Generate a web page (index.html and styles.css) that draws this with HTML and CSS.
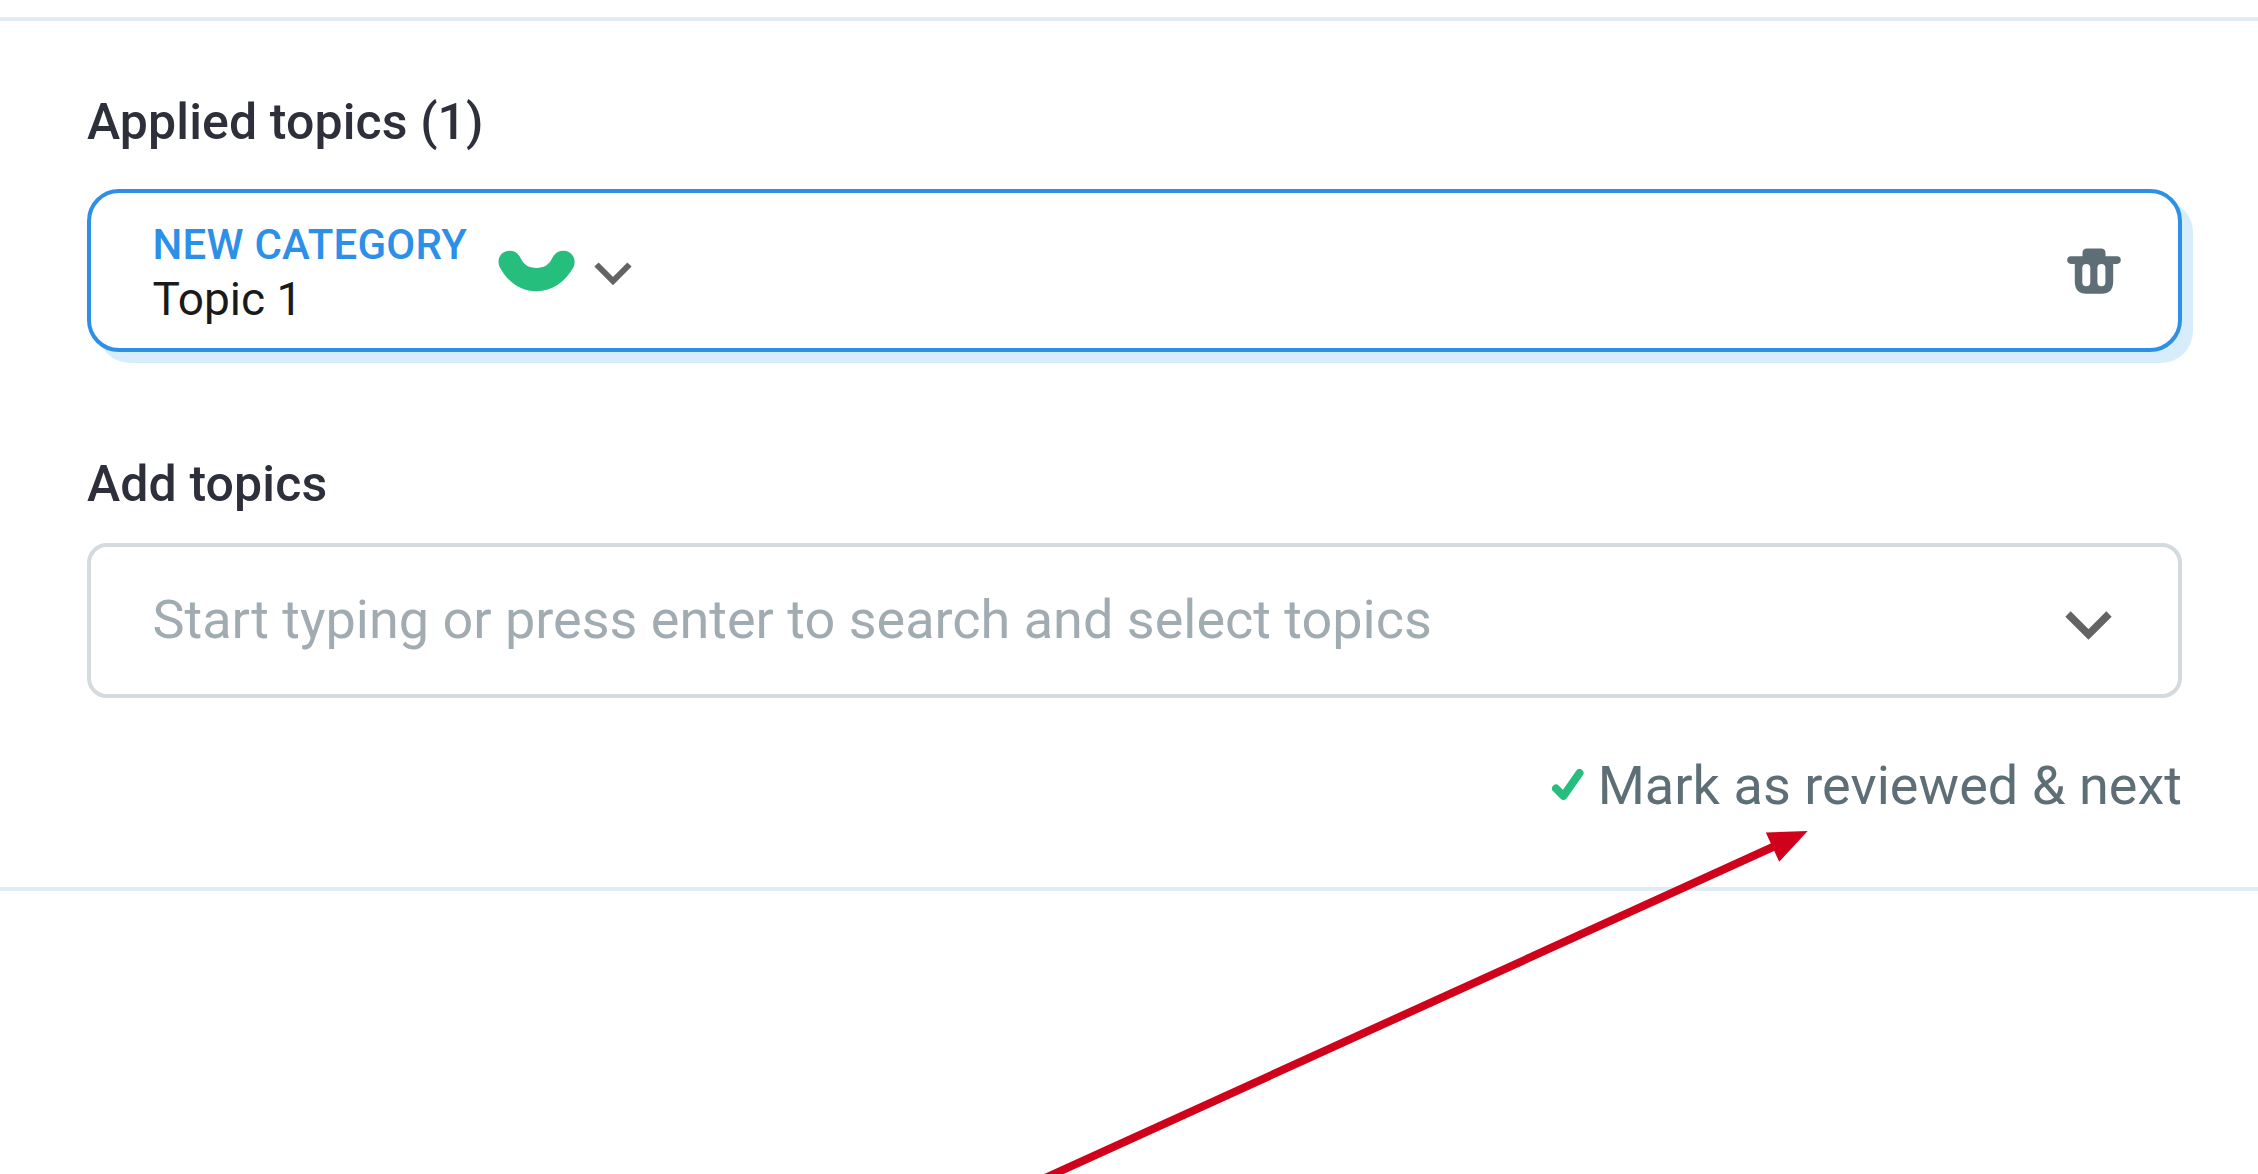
FILE: index.html
```html
<!DOCTYPE html>
<html lang="en">
<head>
<meta charset="utf-8">
<title>Topics</title>
<link rel="stylesheet" href="styles.css">
</head>
<body>
<main class="panel">
  <h2 class="heading">Applied topics (1)</h2>
  <div class="topic-card">
    <div class="topic-text">
      <span class="topic-category">NEW CATEGORY</span>
      <span class="topic-name">Topic 1</span>
    </div>
    <svg class="smile" width="78" height="42" viewBox="0 0 78 42"><path d="M1.600 17C-1.800 9 3 .8 11.300 .8C17 .8 20.500 3.500 22.800 8.500C26 15 31 17.900 38.500 17.900C46 17.900 50.800 15 54 8.500C56.500 3.500 60 .8 65.500 .8C73.500 .8 79 8.500 75.600 17C67.500 32 54 41.300 38.500 41.300C23 41.300 9.500 32 1.600 17Z" fill="#25be7d"/></svg>
    <svg class="chevron-small" width="38" height="24" viewBox="0 0 38 24"><path d="M2.500 2.500L19 19L35.500 2.500" fill="none" stroke="#636363" stroke-width="6"/></svg>
    <svg class="trash" width="54" height="46" viewBox="0 0 54 46"><path fill="#5e6e76" fill-rule="evenodd" d="M20 .5H34Q38.500 .5 38.500 5V8.300H50A3.700 3.700 0 0 1 50 15.900H46.200V33.500Q46.200 45.700 34.500 45.700H19.500Q7.800 45.700 7.800 33.500V15.900H4A3.700 3.700 0 0 1 4 8.300H15.500V5Q15.500 .5 20 .5ZM15.300 19.900V34.300A4 4 0 0 0 23.300 34.300V19.900A4 4 0 0 0 15.300 19.900ZM30.400 19.900V34.300A4 4 0 0 0 38.400 34.300V19.900A4 4 0 0 0 30.400 19.900Z"/></svg>
  </div>
  <h2 class="heading heading-add">Add topics</h2>
  <div class="select">
    <span class="placeholder">Start typing or press enter to search and select topics</span>
    <svg class="chevron" width="48" height="30" viewBox="0 0 48 30"><path d="M4 3L24.500 23.500L45 3" fill="none" stroke="#636363" stroke-width="7.500"/></svg>
  </div>
  <div class="actions">
    <svg class="check" width="32" height="32" viewBox="0 0 32 32"><path d="M4 19.500L11.500 27L27.500 4" fill="none" stroke="#25be7d" stroke-width="8" stroke-linecap="round" stroke-linejoin="round"/></svg>
    <span class="action-label">Mark as reviewed &amp; next</span>
  </div>
</main>
<svg class="arrow" width="2258" height="1174" viewBox="0 0 2258 1174"><path d="M1000 1198.500L1774 846.500" stroke="#d0021b" stroke-width="8"/><path d="M1807.700 831L1765.800 832.500L1779.200 861.700Z" fill="#d0021b"/></svg>
</body>
</html>
```
FILE: styles.css
```css
body {
  display: flow-root;
  margin: 0;
  height: 1174px;
  overflow: hidden;
  background: #fff;
  font-family: Roboto, sans-serif;
}

.panel {
  box-sizing: border-box;
  height: 874px;
  margin-top: 17px;
  padding: 71px 76px 0 87px;
  border-top: 4px solid #e1ebf4;
  border-bottom: 4px solid #e1ebf4;
}

.heading {
  margin: 0 0 37px;
  font-size: 50px;
  line-height: 60px;
  font-weight: 500;
  letter-spacing: 0.12px;
  color: #2d303a;
}

.heading-add {
  margin: 102px 0 29px;
}

.topic-card {
  box-sizing: border-box;
  display: flex;
  align-items: flex-start;
  height: 163px;
  padding: 25px 61.5px 0;
  border: 4px solid #2d90e8;
  border-radius: 32px;
  background: #fff;
  box-shadow: 11px 11px 0 #d8edfb;
}

.topic-text {
  display: flex;
  flex-direction: column;
  width: 345.5px;
  white-space: nowrap;
}

.topic-category {
  font-size: 42px;
  line-height: 53px;
  font-weight: 500;
  letter-spacing: 0.25px;
  color: #2d90e8;
}

.topic-name {
  font-size: 46px;
  line-height: 56px;
  color: #1a1a1a;
}

.smile {
  margin-top: 32px;
}

.chevron-small {
  margin: 43.5px 0 0 17.5px;
}

.trash {
  margin: 29.5px -4px 0 auto;
}

.select {
  box-sizing: border-box;
  display: flex;
  align-items: flex-start;
  justify-content: space-between;
  height: 155px;
  padding: 41px 66px 0 61.5px;
  border: 4px solid #d3dbdf;
  border-radius: 20px;
}

.placeholder {
  font-size: 54px;
  line-height: 64px;
  color: #a1acb2;
}

.chevron {
  margin-top: 23px;
}

.actions {
  display: flex;
  justify-content: flex-end;
  align-items: flex-start;
  gap: 14px;
  margin-top: 56px;
}

.check {
  margin-top: 15px;
}

.action-label {
  font-size: 54px;
  line-height: 64px;
  letter-spacing: 0.05px;
  color: #5e6e76;
}

.arrow {
  position: absolute;
  top: 0;
  left: 0;
}
```
